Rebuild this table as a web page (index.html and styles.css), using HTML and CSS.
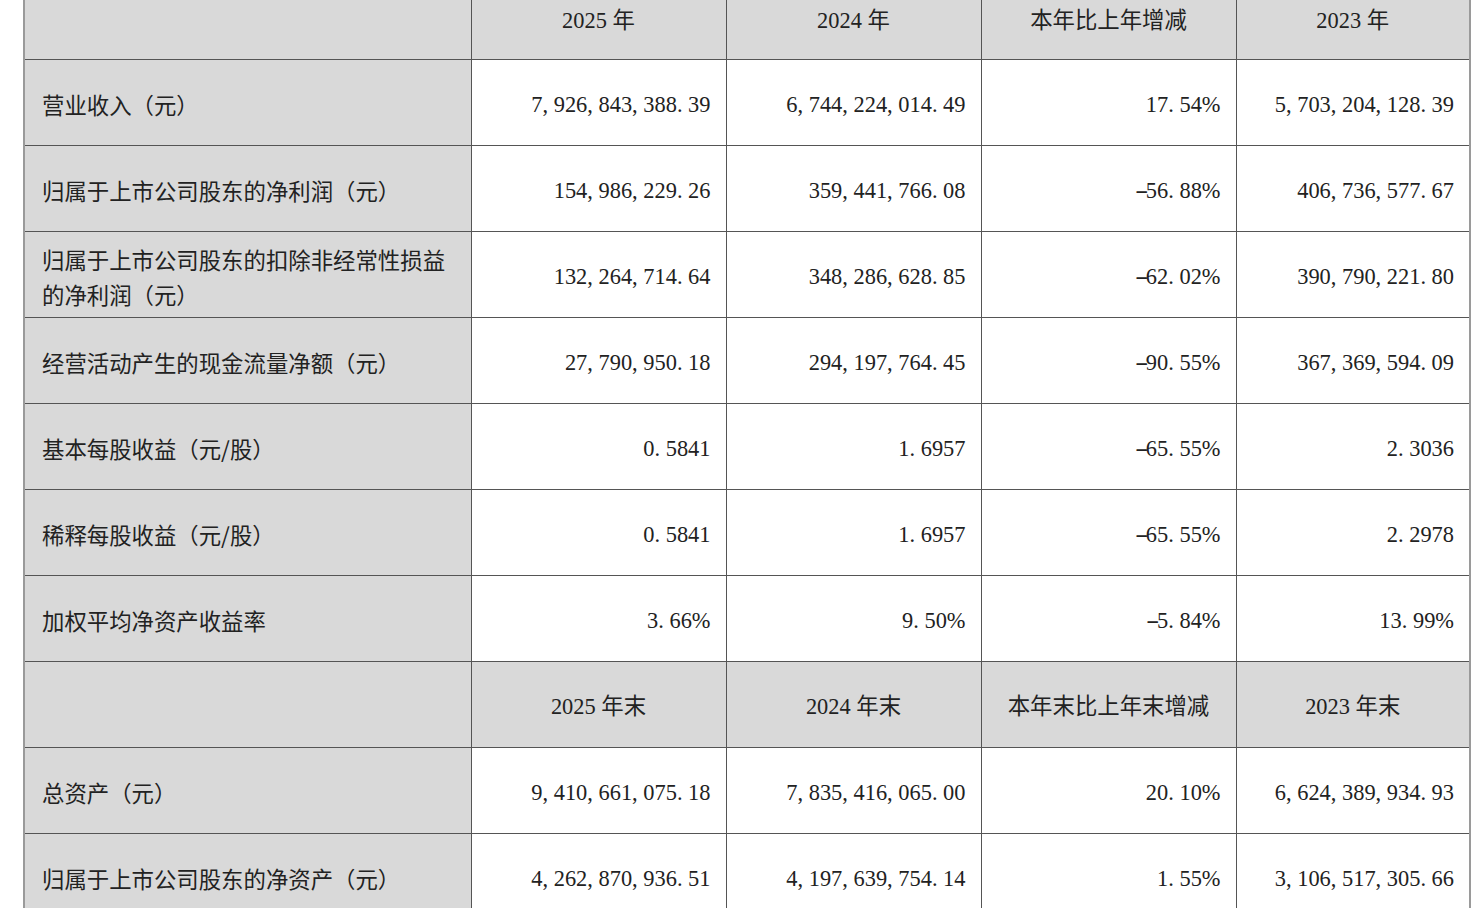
FILE: index.html
```html
<!DOCTYPE html>
<html lang="zh-CN">
<head>
<meta charset="utf-8">
<title>主要会计数据和财务指标</title>
<link rel="stylesheet" href="styles.css">
</head>
<body>
<div class="page">
<table class="fin">
  <colgroup>
    <col class="c-label"><col class="c-num"><col class="c-num"><col class="c-num"><col class="c-last">
  </colgroup>
  <tbody>
    <tr class="head first">
      <td></td><td>2025 年</td><td>2024 年</td><td>本年比上年增减</td><td>2023 年</td>
    </tr>
    <tr>
      <td class="label">营业收入（元）</td>
      <td>7<span class="p">,</span>926<span class="p">,</span>843<span class="p">,</span>388<span class="p">.</span>39</td>
      <td>6<span class="p">,</span>744<span class="p">,</span>224<span class="p">,</span>014<span class="p">.</span>49</td>
      <td>17<span class="p">.</span>54<span class="pc">%</span></td>
      <td>5<span class="p">,</span>703<span class="p">,</span>204<span class="p">,</span>128<span class="p">.</span>39</td>
    </tr>
    <tr>
      <td class="label">归属于上市公司股东的净利润（元）</td>
      <td>154<span class="p">,</span>986<span class="p">,</span>229<span class="p">.</span>26</td>
      <td>359<span class="p">,</span>441<span class="p">,</span>766<span class="p">.</span>08</td>
      <td><span class="m">-</span>56<span class="p">.</span>88<span class="pc">%</span></td>
      <td>406<span class="p">,</span>736<span class="p">,</span>577<span class="p">.</span>67</td>
    </tr>
    <tr>
      <td class="label">归属于上市公司股东的扣除非经常性损益的净利润（元）</td>
      <td>132<span class="p">,</span>264<span class="p">,</span>714<span class="p">.</span>64</td>
      <td>348<span class="p">,</span>286<span class="p">,</span>628<span class="p">.</span>85</td>
      <td><span class="m">-</span>62<span class="p">.</span>02<span class="pc">%</span></td>
      <td>390<span class="p">,</span>790<span class="p">,</span>221<span class="p">.</span>80</td>
    </tr>
    <tr>
      <td class="label">经营活动产生的现金流量净额（元）</td>
      <td>27<span class="p">,</span>790<span class="p">,</span>950<span class="p">.</span>18</td>
      <td>294<span class="p">,</span>197<span class="p">,</span>764<span class="p">.</span>45</td>
      <td><span class="m">-</span>90<span class="p">.</span>55<span class="pc">%</span></td>
      <td>367<span class="p">,</span>369<span class="p">,</span>594<span class="p">.</span>09</td>
    </tr>
    <tr>
      <td class="label">基本每股收益（元/股）</td>
      <td>0<span class="p">.</span>5841</td>
      <td>1<span class="p">.</span>6957</td>
      <td><span class="m">-</span>65<span class="p">.</span>55<span class="pc">%</span></td>
      <td>2<span class="p">.</span>3036</td>
    </tr>
    <tr>
      <td class="label">稀释每股收益（元/股）</td>
      <td>0<span class="p">.</span>5841</td>
      <td>1<span class="p">.</span>6957</td>
      <td><span class="m">-</span>65<span class="p">.</span>55<span class="pc">%</span></td>
      <td>2<span class="p">.</span>2978</td>
    </tr>
    <tr>
      <td class="label">加权平均净资产收益率</td>
      <td>3<span class="p">.</span>66<span class="pc">%</span></td>
      <td>9<span class="p">.</span>50<span class="pc">%</span></td>
      <td><span class="m">-</span>5<span class="p">.</span>84<span class="pc">%</span></td>
      <td>13<span class="p">.</span>99<span class="pc">%</span></td>
    </tr>
    <tr class="head">
      <td></td><td>2025 年末</td><td>2024 年末</td><td>本年末比上年末增减</td><td>2023 年末</td>
    </tr>
    <tr>
      <td class="label">总资产（元）</td>
      <td>9<span class="p">,</span>410<span class="p">,</span>661<span class="p">,</span>075<span class="p">.</span>18</td>
      <td>7<span class="p">,</span>835<span class="p">,</span>416<span class="p">,</span>065<span class="p">.</span>00</td>
      <td>20<span class="p">.</span>10<span class="pc">%</span></td>
      <td>6<span class="p">,</span>624<span class="p">,</span>389<span class="p">,</span>934<span class="p">.</span>93</td>
    </tr>
    <tr>
      <td class="label">归属于上市公司股东的净资产（元）</td>
      <td>4<span class="p">,</span>262<span class="p">,</span>870<span class="p">,</span>936<span class="p">.</span>51</td>
      <td>4<span class="p">,</span>197<span class="p">,</span>639<span class="p">,</span>754<span class="p">.</span>14</td>
      <td>1<span class="p">.</span>55<span class="pc">%</span></td>
      <td>3<span class="p">,</span>106<span class="p">,</span>517<span class="p">,</span>305<span class="p">.</span>66</td>
    </tr>
  </tbody>
</table>
</div>
</body>
</html>
```

FILE: styles.css
```css
html, body {
  margin: 0;
  padding: 0;
  background: #ffffff;
}

.page {
  padding-left: 23px;
  margin-top: -27px;
  overflow: hidden;
}

.fin {
  border-collapse: collapse;
  table-layout: fixed;
  width: 1447px;
  font-family: "Liberation Serif", "Noto Sans CJK SC", serif;
  font-size: 22.4px;
  color: #222222;
  border-left: 2px solid #9a9a9a;
  border-right: 2px solid #9a9a9a;
}

.c-label { width: 447px; }
.c-num { width: 255px; }
.c-last { width: 234px; }

.fin td {
  height: 81px;
  border: 1px solid #555555;
  padding: 4px 15px 0 17px;
  text-align: right;
  vertical-align: middle;
  line-height: 35px;
  white-space: nowrap;
  background: #ffffff;
}

.fin td.label {
  text-align: left;
  white-space: normal;
  background: #d9d9d9;
  font-family: "Noto Sans CJK SC", sans-serif;
  padding-right: 8px;
}

.fin tr.head td {
  background: #d9d9d9;
  text-align: center;
  padding-left: 0;
  padding-right: 0;
}

.fin tr.first td {
  height: 77px;
  padding-top: 8px;
}

.p {
  letter-spacing: 0.25em;
}

.pc {
  letter-spacing: -0.3em;
  margin-right: 0.3em;
}

.m {
  display: inline-block;
  transform: scaleX(1.8);
  transform-origin: left center;
  margin-right: 0.15em;
}
```
